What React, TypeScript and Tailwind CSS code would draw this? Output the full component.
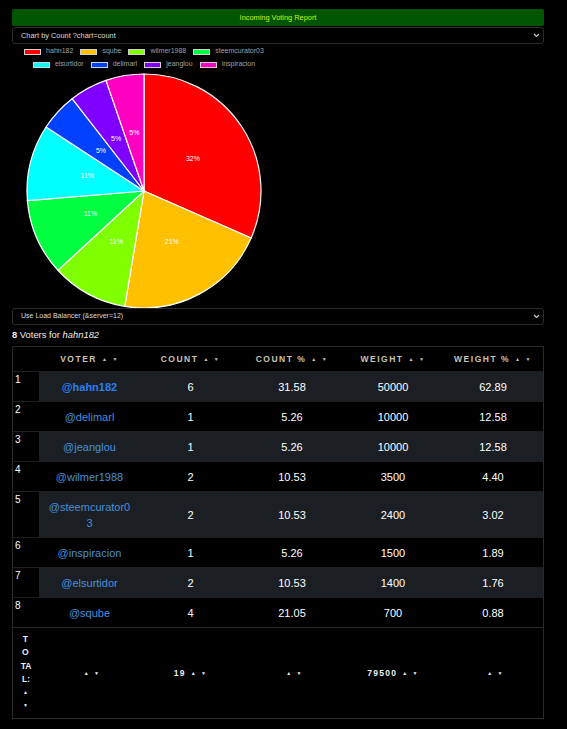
import React from "react";

type Voter = {
  name: string;
  count: number;
  pct: string;
  weight: number;
  wpct: string;
};

const slices = [
  { name: "hahn182", count: 6, color: "#ff0000" },
  { name: "sqube", count: 4, color: "#ffc000" },
  { name: "wilmer1988", count: 2, color: "#80ff00" },
  { name: "steemcurator03", count: 2, color: "#00ff40" },
  { name: "elsurtidor", count: 2, color: "#00ffff" },
  { name: "delimarl", count: 1, color: "#0040ff" },
  { name: "jeanglou", count: 1, color: "#8000ff" },
  { name: "inspiracion", count: 1, color: "#ff00c0" },
];

const voters: Voter[] = [
  { name: "hahn182", count: 6, pct: "31.58", weight: 50000, wpct: "62.89" },
  { name: "delimarl", count: 1, pct: "5.26", weight: 10000, wpct: "12.58" },
  { name: "jeanglou", count: 1, pct: "5.26", weight: 10000, wpct: "12.58" },
  { name: "wilmer1988", count: 2, pct: "10.53", weight: 3500, wpct: "4.40" },
  { name: "steemcurator03", count: 2, pct: "10.53", weight: 2400, wpct: "3.02" },
  { name: "inspiracion", count: 1, pct: "5.26", weight: 1500, wpct: "1.89" },
  { name: "elsurtidor", count: 2, pct: "10.53", weight: 1400, wpct: "1.76" },
  { name: "sqube", count: 4, pct: "21.05", weight: 700, wpct: "0.88" },
];

const font = { fontFamily: '"Liberation Sans", Arial, sans-serif' };

function Arrows() {
  return (
    <span className="ml-[5px] inline-flex items-center gap-[4px] text-[5px] leading-none align-middle">
      <span>▲</span>
      <span>▼</span>
    </span>
  );
}

function FakeSelect({ label, size }: { label: string; size: string }) {
  return (
    <div className={`h-[17px] border border-[#2c2c2c] rounded-[3px] bg-black flex items-center justify-between pl-[8px] pr-[3px] text-[#dcdcdc] ${size}`}>
      <span>{label}</span>
      <svg width="7" height="5" viewBox="0 0 7 5">
        <polyline points="1,1 3.5,3.5 6,1" fill="none" stroke="#ccc" strokeWidth="1.2" />
      </svg>
    </div>
  );
}

function Pie() {
  const cx = 132;
  const cy = 119;
  const r = 117;
  const total = slices.reduce((s, d) => s + d.count, 0);
  let acc = 0;
  const parts = slices.map((d) => {
    const a0 = (acc / total) * Math.PI * 2;
    acc += d.count;
    const a1 = (acc / total) * Math.PI * 2;
    const x0 = cx + r * Math.sin(a0);
    const y0 = cy - r * Math.cos(a0);
    const x1 = cx + r * Math.sin(a1);
    const y1 = cy - r * Math.cos(a1);
    const large = a1 - a0 > Math.PI ? 1 : 0;
    const mid = (a0 + a1) / 2;
    return {
      ...d,
      path: `M${cx},${cy} L${x0},${y0} A${r},${r} 0 ${large} 1 ${x1},${y1} Z`,
      lx: cx + r * 0.5 * Math.sin(mid),
      ly: cy - r * 0.5 * Math.cos(mid),
      label: Math.round((d.count / total) * 100) + "%",
    };
  });
  return (
    <svg width="264" height="236" viewBox="0 0 264 236" className="block">
      {parts.map((p) => (
        <path key={p.name} d={p.path} fill={p.color} stroke="#fff" strokeWidth="1.2" />
      ))}
      {parts.map((p) => (
        <text
          key={p.name + "l"}
          x={p.lx}
          y={p.ly}
          fill="#fff"
          fontSize="7"
          textAnchor="middle"
          dominantBaseline="middle"
          style={font}
        >
          {p.label}
        </text>
      ))}
    </svg>
  );
}

function LegendItem({ name, color }: { name: string; color: string }) {
  return (
    <div className="flex items-center gap-[5px]">
      <span className="w-[17px] h-[6px] border border-[#d0d0d0]" style={{ background: color }} />
      <span className="text-[7px] text-[#a0a0a0]">{name}</span>
    </div>
  );
}

const cols = "grid grid-cols-[26px_101px_101px_102px_100px_1fr]";

export default function App() {
  return (
    <div className="min-h-screen bg-black text-white px-[12px] pt-[9px]" style={font}>
      <div className="w-[532px]">
        <div className="h-[17px] bg-[#005500] rounded-[2px] flex items-center justify-center text-[7.4px] text-[#d2f000]">
          Incoming Voting Report
        </div>
        <div className="mt-[1px]">
          <FakeSelect label="Chart by Count ?chart=count" size="text-[7.4px]" />
        </div>

        <div className="w-[264px] pt-[1px] flex flex-col items-center">
          <div className="h-[13px] flex items-center gap-[7px]">
            {slices.slice(0, 4).map((s) => (
              <LegendItem key={s.name} name={s.name} color={s.color} />
            ))}
          </div>
          <div className="h-[13px] flex items-center gap-[7px]">
            {slices.slice(4).map((s) => (
              <LegendItem key={s.name} name={s.name} color={s.color} />
            ))}
          </div>
        </div>

        <div className="mt-[1px]">
          <Pie />
        </div>

        <FakeSelect label="Use Load Balancer (&server=12)" size="text-[7px]" />

        <div className="h-[21px] flex items-center text-[9.4px] text-[#eee]">
          <b>8</b>&nbsp;Voters for&nbsp;<i>hahn182</i>
        </div>

        <div className="border border-[#2a2a2a]">
          <div className={`${cols} h-[24px] items-center text-[8.5px] font-bold tracking-[1.5px] text-[#cbc3b0]`}>
            <div />
            <div className="text-center">VOTER<Arrows /></div>
            <div className="text-center">COUNT<Arrows /></div>
            <div className="text-center">COUNT %<Arrows /></div>
            <div className="text-center">WEIGHT<Arrows /></div>
            <div className="text-center">WEIGHT %<Arrows /></div>
          </div>

          {voters.map((v, i) => (
            <div
              key={v.name}
              className={`${cols} border-t border-[#1e1e1e] text-[11px] leading-[16px] ${i % 2 === 0 ? "bg-[#1b1f23]" : "bg-black"}`}
            >
              <div className="bg-black pl-[2px] pt-[2px] text-[10px] leading-[12px]">{i + 1}</div>
              <div className="pt-[7px] pb-[6px] px-[8px] text-center break-all">
                <span className={i === 0 ? "font-bold text-[#2b7ff0]" : "text-[#4590dc]"}>@{v.name}</span>
              </div>
              <div className="text-center self-center">{v.count}</div>
              <div className="text-center self-center">{v.pct}</div>
              <div className="text-center self-center">{v.weight}</div>
              <div className="text-center self-center">{v.wpct}</div>
            </div>
          ))}

          <div className={`${cols} border-t border-[#2a2a2a] items-center text-[8.5px] font-bold tracking-[1.3px] text-[#eee]`}>
            <div className="flex flex-col items-center py-[5px] leading-[13.3px]">
              <span>T</span>
              <span>O</span>
              <span className="tracking-normal">TA</span>
              <span className="tracking-normal">L:</span>
              <span className="text-[5px]">▲</span>
              <span className="text-[5px]">▼</span>
            </div>
            <div className="text-center"><Arrows /></div>
            <div className="text-center">19<Arrows /></div>
            <div className="text-center"><Arrows /></div>
            <div className="text-center">79500<Arrows /></div>
            <div className="text-center"><Arrows /></div>
          </div>
        </div>
      </div>
    </div>
  );
}
